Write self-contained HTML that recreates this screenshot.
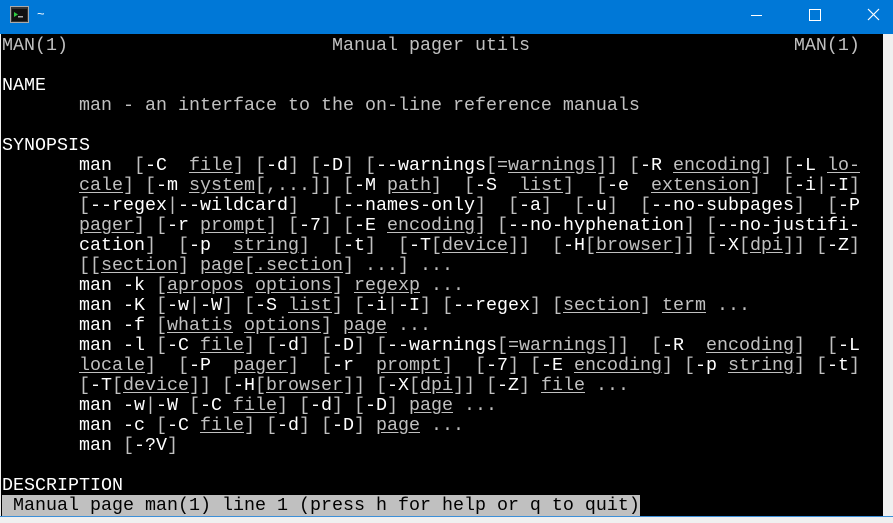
<!DOCTYPE html>
<html><head><meta charset="utf-8"><style>
html,body{margin:0;padding:0;width:893px;height:523px;overflow:hidden;background:#f0f0f0}
#tb{position:absolute;left:0;top:0;width:893px;height:34px;background:#0078d7}
#term{position:absolute;left:1px;top:34px;width:882px;height:482px;background:#000}
#sb{position:absolute;left:883px;top:34px;width:10px;height:482px;background:#f0f0f0}
#bl{position:absolute;left:0;top:516px;width:893px;height:1px;background:#3c8fd8}
pre{position:absolute;left:2px;top:36px;margin:0;font-family:"Liberation Mono",monospace;font-size:18.33px;line-height:20px;color:#c0c0c0;white-space:pre}
b{font-weight:normal;color:#fff}
u{text-decoration:underline;text-underline-offset:2px}
.st{background:#c0c0c0;color:#000}
</style></head><body>
<div id="tb">
<svg style="position:absolute;left:10px;top:6px" width="20" height="18" viewBox="0 0 20 18"><rect x="0.5" y="0.5" width="18" height="16" fill="#333" stroke="#aaa"/><rect x="2" y="3" width="15" height="12" fill="#111"/><path d="M4 6l4 2.5-4 2.5z" fill="#2ecc40"/><rect x="8" y="10" width="5" height="1.5" fill="#aaa"/></svg>
<span style="position:absolute;left:37px;top:6px;color:#fff;font-family:'Liberation Sans',sans-serif;font-size:13px">~</span>
<div style="position:absolute;left:751px;top:15px;width:11px;height:1px;background:#fff"></div>
<div style="position:absolute;left:809px;top:9px;width:10px;height:10px;border:1px solid #fff"></div>
<svg style="position:absolute;left:867px;top:8px" width="13" height="13"><path d="M1 1L12 12M12 1L1 12" stroke="#fff" stroke-width="1.2"/></svg>
</div>
<div id="term"></div><div id="sb"></div><div id="bl"></div>
<pre>MAN(1)                        Manual pager utils                        MAN(1)

<b>NAME</b>
       man - an interface to the on-line reference manuals

<b>SYNOPSIS</b>
       <b>man</b>  [<b>-C</b>  <u>file</u>] [<b>-d</b>] [<b>-D</b>] [<b>--warnings</b>[=<u>warnings</u>]] [<b>-R</b> <u>encoding</u>] [<b>-L</b> <u>lo-</u>
       <u>cale</u>] [<b>-m</b> <u>system</u>[,...]] [<b>-M</b> <u>path</u>]  [<b>-S</b>  <u>list</u>]  [<b>-e</b>  <u>extension</u>]  [<b>-i</b>|<b>-I</b>]
       [<b>--regex</b>|<b>--wildcard</b>]   [<b>--names-only</b>]  [<b>-a</b>]  [<b>-u</b>]  [<b>--no-subpages</b>]  [<b>-P</b>
       <u>pager</u>] [<b>-r</b> <u>prompt</u>] [<b>-7</b>] [<b>-E</b> <u>encoding</u>] [<b>--no-hyphenation</b>] [<b>--no-justifi-</b>
       <b>cation</b>]  [<b>-p</b>  <u>string</u>]  [<b>-t</b>]  [<b>-T</b>[<u>device</u>]]  [<b>-H</b>[<u>browser</u>]] [<b>-X</b>[<u>dpi</u>]] [<b>-Z</b>]
       [[<u>section</u>] <u>page</u>[<u>.section</u>] ...] ...
       <b>man</b> <b>-k</b> [<u>apropos</u> <u>options</u>] <u>regexp</u> ...
       <b>man</b> <b>-K</b> [<b>-w</b>|<b>-W</b>] [<b>-S</b> <u>list</u>] [<b>-i</b>|<b>-I</b>] [<b>--regex</b>] [<u>section</u>] <u>term</u> ...
       <b>man</b> <b>-f</b> [<u>whatis</u> <u>options</u>] <u>page</u> ...
       <b>man</b> <b>-l</b> [<b>-C</b> <u>file</u>] [<b>-d</b>] [<b>-D</b>] [<b>--warnings</b>[=<u>warnings</u>]]  [<b>-R</b>  <u>encoding</u>]  [<b>-L</b>
       <u>locale</u>]  [<b>-P</b>  <u>pager</u>]  [<b>-r</b>  <u>prompt</u>]  [<b>-7</b>] [<b>-E</b> <u>encoding</u>] [<b>-p</b> <u>string</u>] [<b>-t</b>]
       [<b>-T</b>[<u>device</u>]] [<b>-H</b>[<u>browser</u>]] [<b>-X</b>[<u>dpi</u>]] [<b>-Z</b>] <u>file</u> ...
       <b>man</b> <b>-w</b>|<b>-W</b> [<b>-C</b> <u>file</u>] [<b>-d</b>] [<b>-D</b>] <u>page</u> ...
       <b>man</b> <b>-c</b> [<b>-C</b> <u>file</u>] [<b>-d</b>] [<b>-D</b>] <u>page</u> ...
       <b>man</b> [<b>-?V</b>]

<b>DESCRIPTION</b>
<span class="st"> Manual page man(1) line 1 (press h for help or q to quit)</span></pre>
</body></html>
